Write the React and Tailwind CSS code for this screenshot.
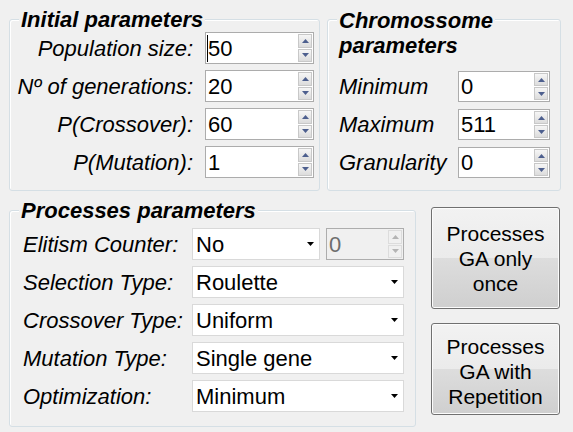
import React from "react";

const font = { fontFamily: '"Liberation Sans", Arial, sans-serif' };

function SpinArrow({ up, disabled }) {
  return (
    <svg width="7" height="4" viewBox="0 0 7 4">
      <path
        d={up ? "M0 4 L3.5 0 L7 4 Z" : "M0 0 L7 0 L3.5 4 Z"}
        fill={disabled ? "#b4b4b4" : "#4d5f8e"}
      />
    </svg>
  );
}

function Spinner({ disabled }) {
  const cls = disabled
    ? "border-[#dcdcdc] bg-[#f0f0f0]"
    : "border-[#c8c8c8] bg-gradient-to-b from-[#f6f6f6] to-[#dcdcdc]";
  return (
    <div className="flex w-[15px] flex-col gap-[1px] py-[1px] pr-[1px]">
      <div className={`flex flex-1 items-center justify-center border ${cls}`}>
        <SpinArrow up disabled={disabled} />
      </div>
      <div className={`flex flex-1 items-center justify-center border ${cls}`}>
        <SpinArrow disabled={disabled} />
      </div>
    </div>
  );
}

function NumInput({ value, w, h = "h-[32px]", caret, disabled }) {
  return (
    <div
      className={`flex ${w} ${h} border ${
        disabled
          ? "border-[#adadad] bg-[#f0f0f0] text-[#6d6d6d]"
          : "border-[#acacac] bg-white text-black"
      }`}
    >
      <div className="flex flex-1 items-center pl-[1px] text-[22px]">
        {caret && <span className="h-[27px] w-[1px] bg-black" />}
        <span className={caret ? "" : "pl-[1px]"}>{value}</span>
      </div>
      <Spinner disabled={disabled} />
    </div>
  );
}

function Combo({ value, w }) {
  return (
    <div
      className={`flex h-[32px] ${w} items-center justify-between border border-[#d9d9d9] bg-white pl-[3px] pr-[5px] text-[22px] text-black`}
    >
      <span>{value}</span>
      <svg width="7" height="4" viewBox="0 0 7 4">
        <path d="M0 0 L7 0 L3.5 4 Z" fill="#000" />
      </svg>
    </div>
  );
}

function Group({ className, title, children }) {
  return (
    <div
      className={`flex flex-col rounded-[3px] border border-[#d5dfe5] shadow-[inset_1px_1px_0_#ffffff] ${className}`}
    >
      <div className="-mt-[12px] ml-[9px] self-start bg-[#f0f0f0] px-[2px] text-[22px] font-bold italic leading-[24px] text-black">
        {title}
      </div>
      {children}
    </div>
  );
}

function WinButton({ h, lines, pt }) {
  return (
    <div
      className={`flex ${h} w-[129px] flex-col items-center justify-center rounded-[3px] border border-[#707070] bg-[linear-gradient(to_bottom,#f2f2f2_0%,#ebebeb_50%,#dddddd_50%,#cfcfcf_100%)] text-center text-[21px] leading-[25px] text-black shadow-[inset_0_0_0_1px_#fcfcfc] ${pt}`}
    >
      {lines.map((l) => (
        <div key={l}>{l}</div>
      ))}
    </div>
  );
}

export default function App() {
  const initial = [
    ["Population size:", "50", true],
    ["Nº of generations:", "20"],
    ["P(Crossover):", "60"],
    ["P(Mutation):", "1"],
  ];
  const chromo = [
    ["Minimum", "0"],
    ["Maximum", "511"],
    ["Granularity", "0"],
  ];
  const procs = [
    ["Selection Type:", "Roulette"],
    ["Crossover Type:", "Uniform"],
    ["Mutation Type:", "Single gene"],
    ["Optimization:", "Minimum"],
  ];
  return (
    <div
      style={font}
      className="h-[432px] w-[573px] overflow-hidden bg-[#f0f0f0] pl-[9px] pt-[19px] text-black"
    >
      <div className="flex h-[172px] gap-[7px]">
        <Group className="w-[311px]" title="Initial parameters">
          <div className="flex flex-col gap-[6px]">
            {initial.map(([label, val, caret]) => (
              <div key={label} className="flex h-[32px] items-center">
                <div className="w-[184px] pr-[1px] text-right text-[22px] italic">{label}</div>
                <div className="ml-[11px]">
                  <NumInput value={val} w="w-[109px]" caret={caret} />
                </div>
              </div>
            ))}
          </div>
        </Group>
        <Group
          className="w-[234px]"
          title={
            <div className="leading-[25px]">
              Chromossome
              <br />
              parameters
            </div>
          }
        >
          <div className="mt-[13px] flex flex-col gap-[7px] pl-[11px]">
            {chromo.map(([label, val]) => (
              <div key={label} className="flex h-[31px] items-center">
                <div className="w-[119px] text-[22px] italic">{label}</div>
                <NumInput value={val} w="w-[92px]" h="h-[31px]" />
              </div>
            ))}
          </div>
        </Group>
      </div>
      <div className="mt-[16px] flex">
        <Group className="mt-[3px] h-[217px] w-[407px]" title="Processes parameters">
          <div className="mt-[5px] flex flex-col gap-[6px] pl-[13px]">
            <div className="flex h-[32px] items-center">
              <div className="w-[169px] text-[22px] italic">Elitism Counter:</div>
              <Combo value="No" w="w-[128px]" />
              <div className="ml-[6px]">
                <NumInput value="0" w="w-[78px]" disabled />
              </div>
            </div>
            {procs.map(([label, val]) => (
              <div key={label} className="flex h-[32px] items-center">
                <div className="w-[169px] text-[22px] italic">{label}</div>
                <Combo value={val} w="w-[212px]" />
              </div>
            ))}
          </div>
        </Group>
        <div className="ml-[15px] flex flex-col gap-[14px]">
          <WinButton h="h-[102px]" lines={["Processes", "GA only", "once"]} pt="" />
          <WinButton h="h-[92px]" lines={["Processes", "GA with", "Repetition"]} pt="pt-[4px]" />
        </div>
      </div>
    </div>
  );
}
